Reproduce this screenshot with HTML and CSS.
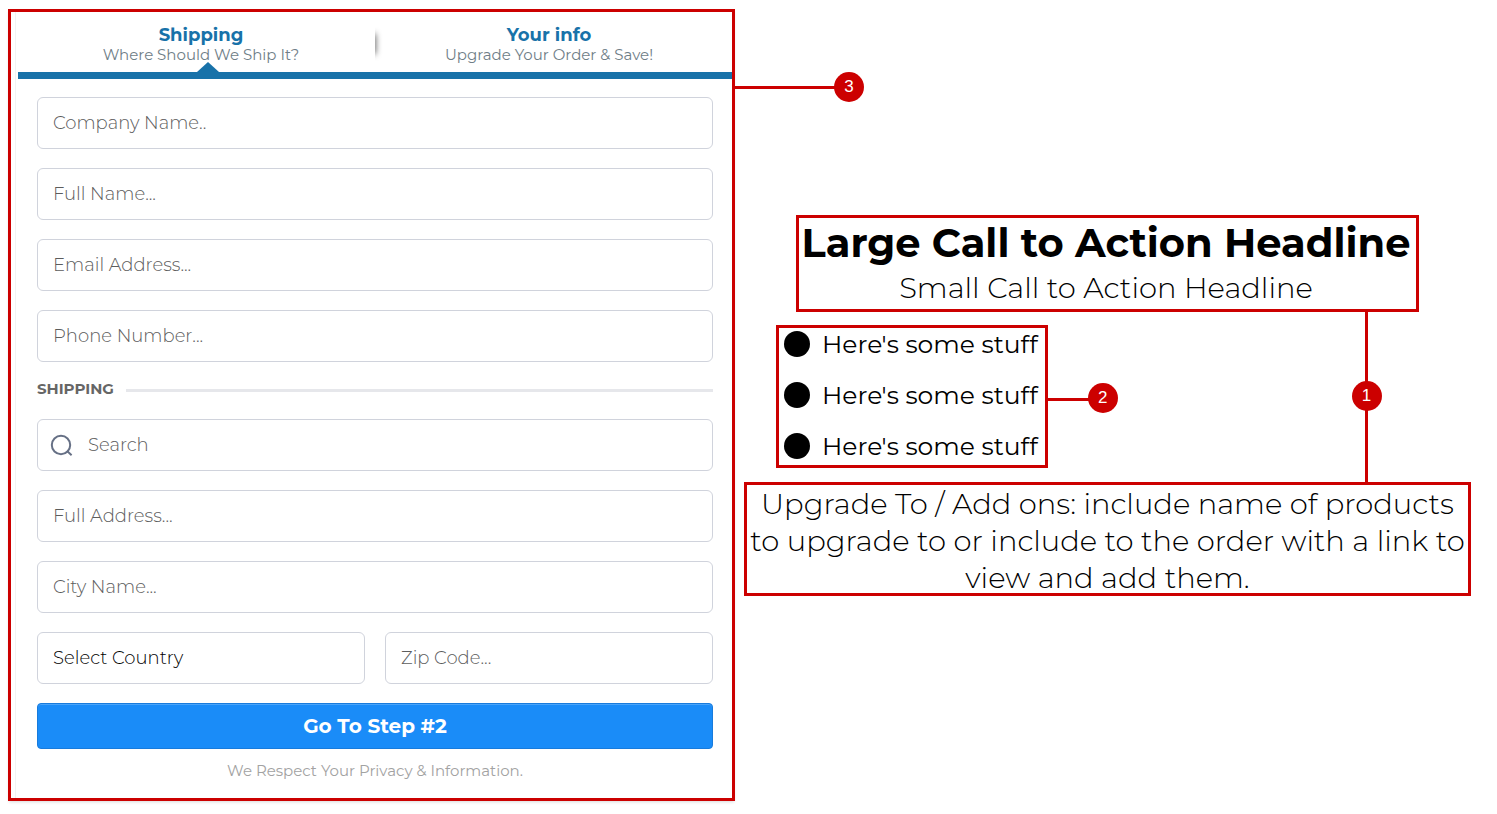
FILE: index.html
```html
<!DOCTYPE html>
<html lang="en">
<head>
    <meta charset="UTF-8">
    <meta name="viewport" content="width=device-width, initial-scale=1.0">
    <title>Two Step Order Form</title>
    <link rel="stylesheet" href="styles.css">
</head>
<body>
    <main class="page">
        <!-- Order form -->
        <section class="callout order">
            <div class="card">
                <div class="steps">
                    <div class="step active">
                        <h2>Shipping</h2>
                        <p>Where Should We Ship It?</p>
                    </div>
                    <div class="step">
                        <h2>Your info</h2>
                        <p>Upgrade Your Order &amp; Save!</p>
                    </div>
                </div>
                <form class="order-form">
                    <input class="field" type="text" aria-label="Company Name" placeholder="Company Name..">
                    <input class="field" type="text" aria-label="Full Name" placeholder="Full Name...">
                    <input class="field" type="email" aria-label="Email Address" placeholder="Email Address...">
                    <input class="field" type="tel" aria-label="Phone Number" placeholder="Phone Number...">
                    <h3 class="divider">SHIPPING</h3>
                    <div class="search">
                        <svg class="search-icon" width="24" height="24" viewBox="0 0 24 24" fill="none" stroke="#667085" stroke-width="2" aria-hidden="true">
                            <circle cx="11" cy="11" r="9.2"/>
                            <path d="M16.8 16.8L21.6 21.2"/>
                        </svg>
                        <input class="field" type="search" aria-label="Search" placeholder="Search">
                    </div>
                    <input class="field" type="text" aria-label="Full Address" placeholder="Full Address...">
                    <input class="field" type="text" aria-label="City Name" placeholder="City Name...">
                    <div class="row">
                        <select class="field" aria-label="Country">
                            <option>Select Country</option>
                        </select>
                        <input class="field" type="text" aria-label="Zip Code" placeholder="Zip Code...">
                    </div>
                    <button class="submit" type="button">Go To Step #2</button>
                </form>
                <p class="privacy">We Respect Your Privacy &amp; Information.</p>
            </div>
            <span class="line line-right line-3"></span>
            <span class="badge badge-3">3</span>
        </section>

        <!-- Sales copy -->
        <section class="copy">
            <header class="callout headline">
                <h1>Large Call to Action Headline</h1>
                <p>Small Call to Action Headline</p>
                <span class="line line-down"></span>
                <span class="badge badge-1">1</span>
            </header>
            <div class="callout stuff">
                <ul>
                    <li>Here's some stuff</li>
                    <li>Here's some stuff</li>
                    <li>Here's some stuff</li>
                </ul>
                <span class="line line-right line-2"></span>
                <span class="badge badge-2">2</span>
            </div>
            <div class="callout upgrade">
                <p>Upgrade To / Add ons: include name of products to upgrade to or include to the order with a link to view and add them.</p>
            </div>
        </section>
    </main>
</body>
</html>
```
FILE: styles.css
```css
* {
    box-sizing: border-box;
}
body {
    margin: 0;
    background: #fff;
    color: #000;
    font-family: Montserrat, Inter, sans-serif;
}
h1, h2, h3, p, ul {
    margin: 0;
    padding: 0;
}
.page {
    display: grid;
    grid-template-columns: minmax(0, 1fr) minmax(0, 1fr);
    gap: 9px;
    padding: 9px 26px 12px 8px;
}

/* Red boxes with numbered markers */
.callout {
    position: relative;
    border: 3px solid #cc0000;
}
.line {
    position: absolute;
    background: #cc0000;
}
.line-right {
    left: 100%;
    width: 104px;
    height: 3px;
}
.line-2 {
    top: 70px;
    width: 44px;
}
.line-3 {
    top: 74px;
}
.line-down {
    top: 100%;
    right: 48px;
    width: 3px;
    height: 174px;
}
.badge {
    position: absolute;
    width: 30px;
    height: 30px;
    border-radius: 50%;
    background: #cc0000;
    color: #fff;
    font: 17px/30px "Liberation Sans", Arial, sans-serif;
    text-align: center;
}
.badge-1 {
    top: 163px;
    right: 34px;
}
.badge-2 {
    top: 55px;
    left: calc(100% + 43px);
}
.badge-3 {
    top: 60px;
    left: calc(100% + 102px);
}

/* Form card */
.card {
    margin-left: 4px;
    padding: 0 0 17px 2px;
    border-left: 1px solid #f2f2f2;
}
.order {
    box-shadow: 0 2px 3px -1px rgba(0, 0, 0, 0.15);
}
.steps {
    display: grid;
    grid-template-columns: 1fr 1fr;
    height: 67px;
    padding: 12px 9px 0;
    border-bottom: 7px solid #1872a9;
    text-align: center;
}
.step {
    position: relative;
}
.step h2 {
    color: #1872a9;
    font-size: 18px;
    line-height: 22px;
}
.step p {
    color: #6f7e87;
    font-size: 15px;
    line-height: 18px;
}
.active::before {
    content: "";
    position: absolute;
    right: 0;
    top: 10px;
    width: 4px;
    height: 20px;
    box-shadow: 0 0 6px #222;
    clip-path: inset(-8px -8px -8px 4px);
}
.active::after {
    content: "";
    position: absolute;
    bottom: 0;
    left: calc(50% - 4px);
    border: 11px solid transparent;
    border-top: 0;
    border-bottom: 10px solid #1872a9;
}
.order-form {
    display: flex;
    flex-direction: column;
    gap: 19px;
    padding: 18px 19px 0;
}
.field {
    width: 100%;
    height: 52px;
    padding: 0 15px;
    border: 1px solid #d0d3dc;
    border-radius: 6px;
    background: #fff;
    color: #000;
    font-family: inherit;
    font-size: 18px;
    font-weight: 300;
    appearance: none;
}
.field::placeholder {
    color: #5c5c5c;
}
.divider {
    display: flex;
    align-items: center;
    gap: 12px;
    padding-bottom: 3px;
    color: #666;
    font-size: 15px;
    line-height: 16px;
}
.divider::after {
    content: "";
    flex: 1;
    height: 3px;
    margin-top: 2px;
    background: #e6e7eb;
}
.search {
    position: relative;
}
.search .field {
    padding-left: 50px;
}
.search-icon {
    position: absolute;
    left: 13px;
    top: 15px;
}
.row {
    display: grid;
    grid-template-columns: 1fr 1fr;
    gap: 20px;
}
.submit {
    height: 46px;
    border: 1px solid #187bdc;
    border-radius: 4px;
    background: #1a8cf8;
    box-shadow: inset 0 1px 0 #49a4fa;
    color: #fff;
    font-family: inherit;
    font-size: 20px;
    font-weight: 700;
    cursor: pointer;
}
.privacy {
    padding-top: 12px;
    color: #a2a2a2;
    font-size: 15px;
    line-height: 20px;
    text-align: center;
}

/* Right column */
.copy {
    display: flex;
    flex-direction: column;
    padding-top: 206px;
}
.headline {
    align-self: center;
    padding: 0 5px 1px 2px;
    text-align: center;
}
.headline h1 {
    font-size: 40px;
    line-height: 50px;
    white-space: nowrap;
}
.headline p {
    font-size: 29px;
    font-weight: 300;
    line-height: 40px;
}
.stuff {
    align-self: flex-start;
    margin: 13px 0 14px 32px;
    padding: 0 7px 3px 5px;
}
.stuff ul {
    display: grid;
    gap: 19px;
    list-style: none;
}
.stuff li {
    display: flex;
    align-items: center;
    gap: 12px;
    font-size: 25px;
    line-height: 32px;
}
.stuff li::before {
    content: "";
    width: 26px;
    height: 26px;
    border-radius: 50%;
    background: #000;
}
.upgrade {
    text-align: center;
}
.upgrade p {
    margin-bottom: -3px;
    font-size: 29px;
    font-weight: 300;
    line-height: 37px;
}
```
